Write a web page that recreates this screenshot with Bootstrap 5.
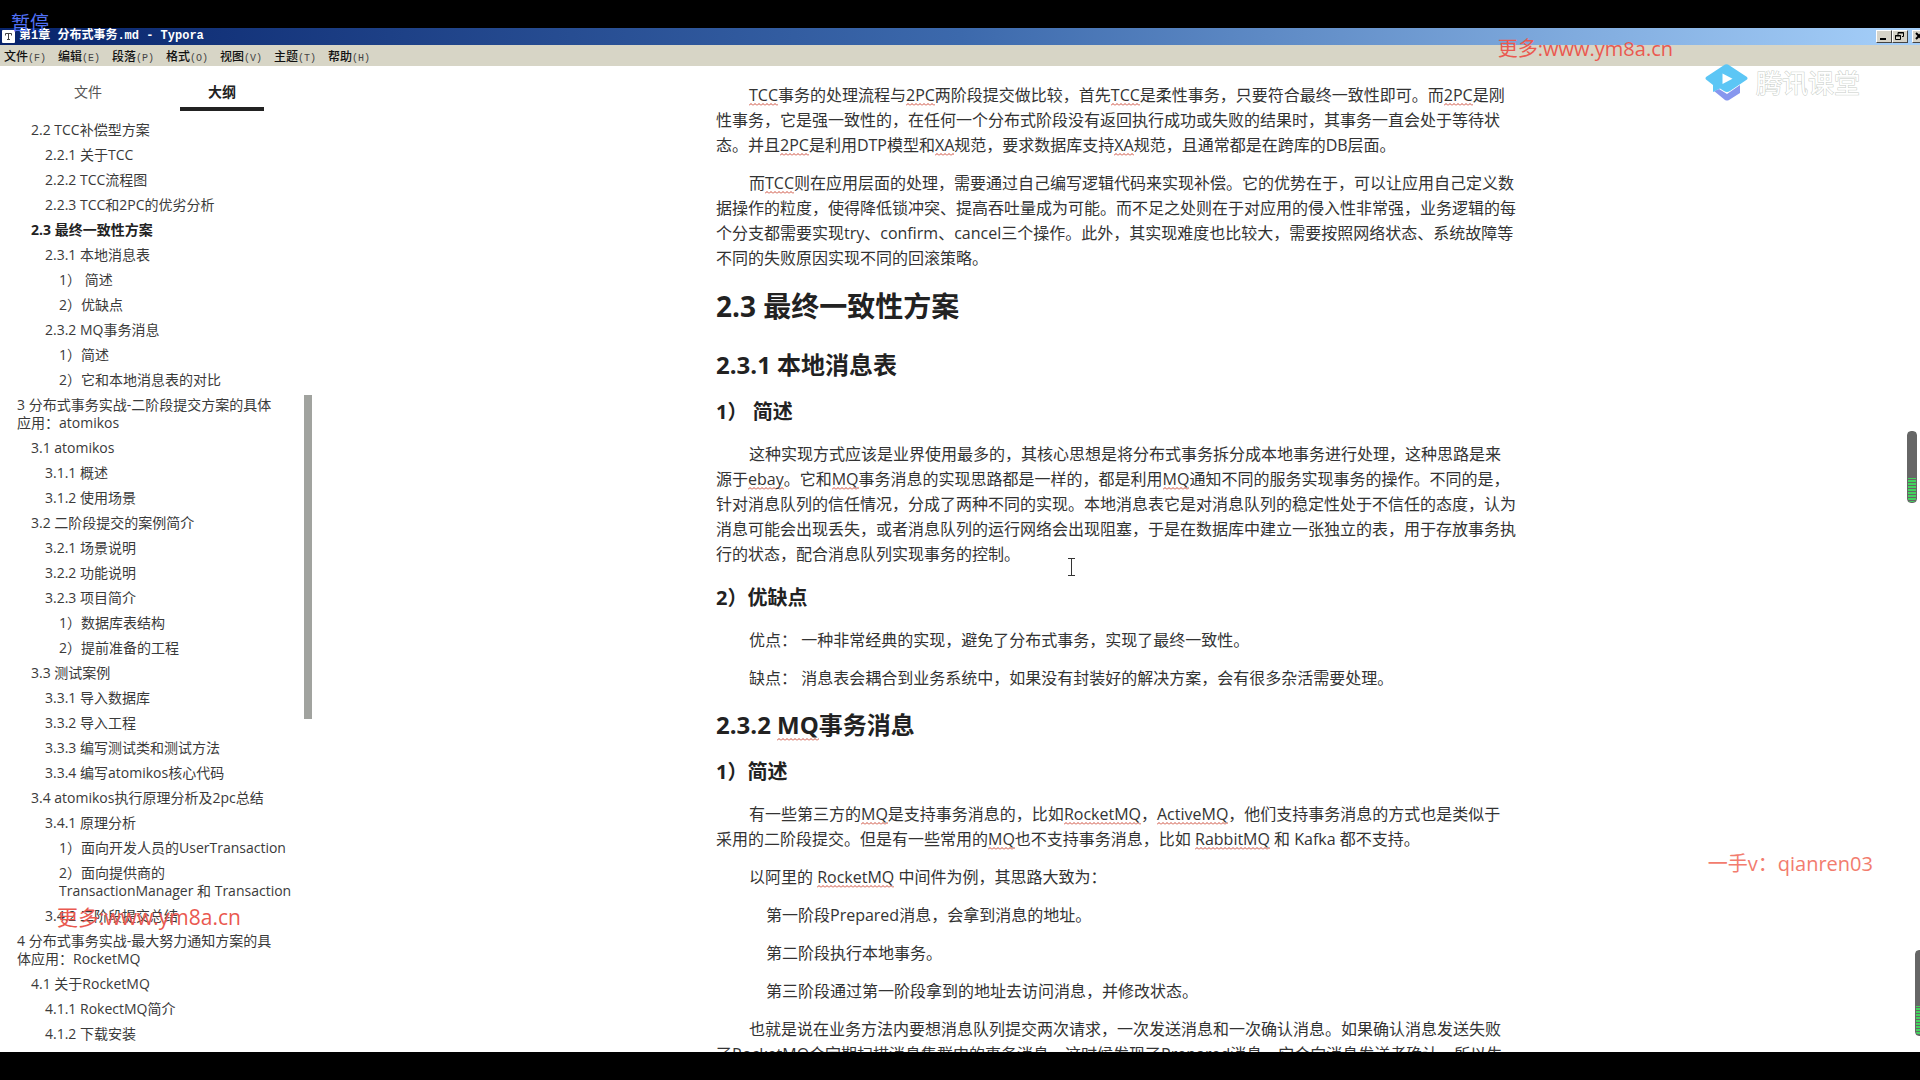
<!DOCTYPE html>
<html lang="zh-CN">
<head>
<meta charset="utf-8">
<meta name="viewport" content="width=device-width, initial-scale=1">
<title>第1章 分布式事务.md - Typora</title>
<link href="https://cdn.jsdelivr.net/npm/bootstrap@5.3.0/dist/css/bootstrap.min.css" rel="stylesheet">
<style>
  body { background: #000; padding: 28px 0; font-family: "Open Sans", "Noto Sans CJK SC", sans-serif; color: #333; }
  .title-strip { height: 17px; background: linear-gradient(90deg, #08246c, #3c69ac 50%, #a6d0fa); color: #fff; font: bold 12px/17px "Liberation Mono", "Noto Sans CJK SC", monospace; padding-left: 2px; }
  .win-btn { width: 16px; height: 13px; padding: 0; border: 1px solid; border-color: #fff #444 #444 #fff; background: #d6d3c8; border-radius: 0; line-height: 0; }
  .win-btn svg, .app-icon, .brand svg, .caret-mark { display: block; }
  .win-group { margin-right: -8px; }
  .menu-strip { height: 21px; background: #d7d5c6; }
  .menu-strip button { border: 0; background: none; padding: 0 0 0 4px; width: 54px; color: #111; font: 500 12px/19px "Noto Sans CJK SC", sans-serif; text-align: left; }
  .menu-strip kbd { all: unset; font: 10px "Liberation Mono", monospace; color: #444; }
  .outline { width: 312px; background: #fff; }
  .outline-tabs { height: 55px; padding: 9px 0 10px 21px; }
  .outline-tabs .nav-link { width: 84px; margin: 0 25px; padding: 0; border-radius: 0; height: 36px; line-height: 33px; font-size: 14px; color: #555; text-align: center; }
  .outline-tabs .nav-link.active { color: #222; font-weight: 700; border-bottom: 4px solid #222; }
  .outline-tree a { display: block; color: #3a3a3a; text-decoration: none; font-size: 14px; line-height: 18px; padding-bottom: 7px; white-space: nowrap; }
  .lv1 { padding-left: 17px; } .lv2 { padding-left: 31px; } .lv3 { padding-left: 45px; } .lv4 { padding-left: 59px; }
  .outline-tree .current { font-weight: 700; color: #222; }
  .outline-thumb { top: 329px; right: 0; width: 8px; height: 324px; background: #a1a39f; }
  .doc { max-width: 860px; padding: 17px 30px 0; font-size: 16px; line-height: 25px; white-space: nowrap; }
  .doc p { margin: 0 0 13px; text-indent: 33px; }
  .doc p.deep { text-indent: 50px; }
  .doc h2, .doc h3, .doc h4 { font-weight: 700; color: #222; }
  .doc h2 { font-size: 28px; line-height: 44px; margin: 13px 0 21px; }
  .doc h3 { font-size: 24px; line-height: 32px; margin: 18px 0; }
  .doc h4 { font-size: 20px; line-height: 24px; margin: 19px 0 18px; }
  .typo { background: url("data:image/svg+xml,%3Csvg xmlns='http://www.w3.org/2000/svg' width='4' height='3'%3E%3Cpath d='M0 2.5L2 .5L4 2.5' fill='none' stroke='%23cc4a38'/%3E%3C/svg%3E") 0 100% repeat-x; }
  .overlay { position: absolute; white-space: nowrap; z-index: 5; pointer-events: none; }
  .pause-tag { left: 11px; top: 11px; font-size: 19px; line-height: 24px; color: #5070f4; }
  .ad { color: #ea5950; line-height: 24px; font-size: 20px; }
  .ad-top { right: 247px; top: 37px; }
  .ad-side { left: 57px; top: 905px; font-size: 21px; }
  .ad-right { right: 47px; top: 852px; color: #f27c6e; }
  .brand { right: 60px; top: 64px; }
  .brand span { font-size: 26px; line-height: 36px; color: #fff; -webkit-text-stroke: 1px #c6ccc6; paint-order: stroke fill; }
  .caret-mark { left: 1067px; top: 558px; }
  .level { border-radius: 4px; background: linear-gradient(#666, #666) top / 100% 66% no-repeat, repeating-linear-gradient(#42d35e 0 2px, #666 2px 3px); border: 1px solid #666; }
  .level-a { right: 3px; top: 431px; width: 10px; height: 72px; }
  .level-b { right: -5px; top: 950px; width: 10px; height: 86px; }
</style>
</head>
<body class="vh-100 d-flex flex-column overflow-hidden position-relative">
  <header class="flex-shrink-0">
    <div class="title-strip d-flex align-items-center justify-content-between">
      <div class="d-flex align-items-center gap-1">
        <svg class="app-icon" width="13" height="13" viewBox="0 0 13 13"><rect width="13" height="13" rx="1" fill="#fff"/><path d="M3.500 5.500v-2h6v2M6.500 3.500v6M5 9.500h3" stroke="#444" fill="none"/></svg>
        <span>第1章 分布式事务.md - Typora</span>
      </div>
      <div class="win-group d-flex">
        <button class="win-btn" aria-label="最小化"><svg width="13" height="11"><path d="M3 8h6" stroke="#000" stroke-width="2"/></svg></button>
        <button class="win-btn" aria-label="还原"><svg width="13" height="11"><path d="M5 4V1.500h5.500v4H9M2.500 4.500h5v4h-5zM2 5h6M5 2h6" stroke="#000" fill="none"/></svg></button>
        <button class="win-btn ms-1" aria-label="关闭"><svg width="13" height="11"><path d="M3 2l6 6M9 2l-6 6" stroke="#000" stroke-width="2"/></svg></button>
      </div>
    </div>
    <nav class="menu-strip d-flex" aria-label="菜单">
      <button>文件<kbd>(F)</kbd></button><button>编辑<kbd>(E)</kbd></button><button>段落<kbd>(P)</kbd></button><button>格式<kbd>(O)</kbd></button><button>视图<kbd>(V)</kbd></button><button>主题<kbd>(T)</kbd></button><button>帮助<kbd>(H)</kbd></button>
    </nav>
  </header>

  <div class="d-flex flex-grow-1 overflow-hidden bg-white">
    <aside class="outline flex-shrink-0 position-relative overflow-hidden">
      <div class="outline-tabs nav">
        <a class="nav-link" href="#files">文件</a>
        <a class="nav-link active" href="#outline">大纲</a>
      </div>
      <nav class="outline-tree" id="outline" aria-label="大纲">
        <a class="lv2" href="#s">2.2 TCC补偿型方案</a>
        <a class="lv3" href="#s">2.2.1 关于TCC</a>
        <a class="lv3" href="#s">2.2.2 TCC流程图</a>
        <a class="lv3" href="#s">2.2.3 TCC和2PC的优劣分析</a>
        <a class="lv2 current" href="#s23">2.3 最终一致性方案</a>
        <a class="lv3" href="#s231">2.3.1 本地消息表</a>
        <a class="lv4" href="#s">1） 简述</a>
        <a class="lv4" href="#s">2）优缺点</a>
        <a class="lv3" href="#s232">2.3.2 MQ事务消息</a>
        <a class="lv4" href="#s">1）简述</a>
        <a class="lv4" href="#s">2）它和本地消息表的对比</a>
        <a class="lv1" href="#s">3 分布式事务实战-二阶段提交方案的具体<br>应用：atomikos</a>
        <a class="lv2" href="#s">3.1 atomikos</a>
        <a class="lv3" href="#s">3.1.1 概述</a>
        <a class="lv3" href="#s">3.1.2 使用场景</a>
        <a class="lv2" href="#s">3.2 二阶段提交的案例简介</a>
        <a class="lv3" href="#s">3.2.1 场景说明</a>
        <a class="lv3" href="#s">3.2.2 功能说明</a>
        <a class="lv3" href="#s">3.2.3 项目简介</a>
        <a class="lv4" href="#s">1）数据库表结构</a>
        <a class="lv4" href="#s">2）提前准备的工程</a>
        <a class="lv2" href="#s">3.3 测试案例</a>
        <a class="lv3" href="#s">3.3.1 导入数据库</a>
        <a class="lv3" href="#s">3.3.2 导入工程</a>
        <a class="lv3" href="#s">3.3.3 编写测试类和测试方法</a>
        <a class="lv3" href="#s">3.3.4 编写atomikos核心代码</a>
        <a class="lv2" href="#s">3.4 atomikos执行原理分析及2pc总结</a>
        <a class="lv3" href="#s">3.4.1 原理分析</a>
        <a class="lv4" href="#s">1）面向开发人员的UserTransaction</a>
        <a class="lv4" href="#s">2）面向提供商的<br>TransactionManager 和 Transaction</a>
        <a class="lv3" href="#s">3.4.2 二阶段提交总结</a>
        <a class="lv1" href="#s">4 分布式事务实战-最大努力通知方案的具<br>体应用：RocketMQ</a>
        <a class="lv2" href="#s">4.1 关于RocketMQ</a>
        <a class="lv3" href="#s">4.1.1 RokectMQ简介</a>
        <a class="lv3" href="#s">4.1.2 下载安装</a>
      </nav>
      <div class="outline-thumb position-absolute"></div>
    </aside>

    <main class="flex-grow-1 overflow-hidden">
      <article class="doc mx-auto">
        <p><span class="typo">TCC</span>事务的处理流程与<span class="typo">2PC</span>两阶段提交做比较，首先<span class="typo">TCC</span>是柔性事务，只要符合最终一致性即可。而<span class="typo">2PC</span>是刚<br>性事务，它是强一致性的，在任何一个分布式阶段没有返回执行成功或失败的结果时，其事务一直会处于等待状<br>态。并且<span class="typo">2PC</span>是利用DTP模型和<span class="typo">XA</span>规范，要求数据库支持<span class="typo">XA</span>规范，且通常都是在跨库的DB层面。</p>
        <p>而<span class="typo">TCC</span>则在应用层面的处理，需要通过自己编写逻辑代码来实现补偿。它的优势在于，可以让应用自己定义数<br>据操作的粒度，使得降低锁冲突、提高吞吐量成为可能。而不足之处则在于对应用的侵入性非常强，业务逻辑的每<br>个分支都需要实现try、confirm、cancel三个操作。此外，其实现难度也比较大，需要按照网络状态、系统故障等<br>不同的失败原因实现不同的回滚策略。</p>
        <h2 id="s23">2.3 最终一致性方案</h2>
        <h3 id="s231">2.3.1 本地消息表</h3>
        <h4>1） 简述</h4>
        <p>这种实现方式应该是业界使用最多的，其核心思想是将分布式事务拆分成本地事务进行处理，这种思路是来<br>源于<span class="typo">ebay</span>。它和<span class="typo">MQ</span>事务消息的实现思路都是一样的，都是利用<span class="typo">MQ</span>通知不同的服务实现事务的操作。不同的是，<br>针对消息队列的信任情况，分成了两种不同的实现。本地消息表它是对消息队列的稳定性处于不信任的态度，认为<br>消息可能会出现丢失，或者消息队列的运行网络会出现阻塞，于是在数据库中建立一张独立的表，用于存放事务执<br>行的状态，配合消息队列实现事务的控制。</p>
        <h4>2）优缺点</h4>
        <p>优点： 一种非常经典的实现，避免了分布式事务，实现了最终一致性。</p>
        <p>缺点： 消息表会耦合到业务系统中，如果没有封装好的解决方案，会有很多杂活需要处理。</p>
        <h3 id="s232">2.3.2 <span class="typo">MQ</span>事务消息</h3>
        <h4>1）简述</h4>
        <p>有一些第三方的<span class="typo">MQ</span>是支持事务消息的，比如<span class="typo">RocketMQ</span>，<span class="typo">ActiveMQ</span>，他们支持事务消息的方式也是类似于<br>采用的二阶段提交。但是有一些常用的<span class="typo">MQ</span>也不支持事务消息，比如 <span class="typo">RabbitMQ</span> 和 Kafka 都不支持。</p>
        <p>以阿里的 <span class="typo">RocketMQ</span> 中间件为例，其思路大致为：</p>
        <p class="deep">第一阶段Prepared消息，会拿到消息的地址。</p>
        <p class="deep">第二阶段执行本地事务。</p>
        <p class="deep">第三阶段通过第一阶段拿到的地址去访问消息，并修改状态。</p>
        <p>也就是说在业务方法内要想消息队列提交两次请求，一次发送消息和一次确认消息。如果确认消息发送失败<br>了RocketMQ会定期扫描消息集群中的事务消息，这时候发现了Prepared消息，它会向消息发送者确认，所以生</p>
      </article>
    </main>
  </div>

  <div class="overlay pause-tag">暂停</div>
  <div class="overlay ad ad-top">更多:www.ym8a.cn</div>
  <div class="overlay ad ad-side">更多:www.ym8a.cn</div>
  <div class="overlay ad ad-right">一手v：qianren03</div>
  <div class="overlay brand d-flex align-items-center gap-2">
    <svg width="43" height="37" viewBox="0 0 43 37"><path d="M9 27l5-2 8 5 13-9v8l-11 7q-2 1-4 0z" fill="#8797ee"/><path d="M20 .600q1.500-.8 3 0L42 13q1 1.500 0 2.500L25 27q-3 2-6 0l-4-2.500-7 3.500v-7L1 15.500q-1-1 0-2.500z" fill="#5cc6f5"/><path d="M17.500 9.500v10.500l10-5.300z" fill="#fff"/></svg>
    <span>腾讯课堂</span>
  </div>
  <svg class="overlay caret-mark" width="9" height="18"><path d="M1 .500h7M4.500 .500v17M1 17.500h7" stroke="#333" fill="none"/></svg>
  <div class="overlay level level-a"></div>
  <div class="overlay level level-b"></div>
</body>
</html>
